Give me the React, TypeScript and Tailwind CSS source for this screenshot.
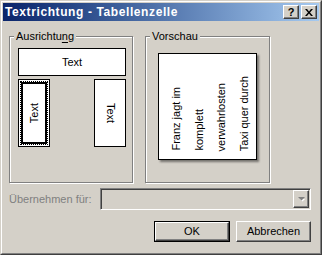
import React from 'react'

const raised =
  'border border-t-white border-l-white border-r-[#404040] border-b-[#404040] shadow-[inset_-1px_-1px_0_#808080] bg-[#d4d0c8]'

function GroupBox({ label, accel, className, children }: { label: string; accel?: number; className: string; children: React.ReactNode }) {
  return (
    <div className={`relative border border-[#808080] shadow-[inset_1px_1px_0_#ffffff,1px_1px_0_#ffffff] ${className}`}>
      <span className="absolute -top-[7px] left-[4px] bg-[#d4d0c8] px-[2px] leading-[13px]">
        {accel === undefined
          ? label
          : (
            <>
              {label.slice(0, accel)}
              <span className="underline underline-offset-2">{label[accel]}</span>
              {label.slice(accel + 1)}
            </>
          )}
      </span>
      {children}
    </div>
  )
}

function TitleBar() {
  return (
    <div className="flex h-[18px] items-center bg-gradient-to-r from-[#0a246a] to-[#a6caf0] pl-[2px] pr-[2px]">
      <span className="text-[12px] font-bold tracking-[0.6px] text-white leading-none">Textrichtung - Tabellenzelle</span>
      <div className="ml-auto flex gap-[2px]">
        <div className={`flex h-[14px] w-[16px] items-center justify-center ${raised}`}>
          <span className="text-[11px] font-bold leading-none">?</span>
        </div>
        <div className={`flex h-[14px] w-[16px] items-center justify-center ${raised}`}>
          <svg width="8" height="7" viewBox="0 0 8 7">
            <path d="M0 0h2l2 2.5L6 0h2L5 3.5 8 7H6L4 4.5 2 7H0l3-3.5z" fill="#000" />
          </svg>
        </div>
      </div>
    </div>
  )
}

export default function App() {
  return (
    <div className="h-[255px] w-[322px] border border-t-[#d4d0c8] border-l-[#d4d0c8] border-r-[#404040] border-b-[#404040] bg-[#d4d0c8] font-['Liberation_Sans',Arial,sans-serif] text-[11px] text-black">
      <div className="flex h-full flex-col border border-t-white border-l-white border-r-[#808080] border-b-[#808080] p-px">
        <TitleBar />

        <div className="mt-[15px] flex gap-[12px] pl-[6px]">
          <GroupBox label="Ausrichtung" accel={9} className="h-[147px] w-[124px]">
            <div className="flex w-[116px] flex-col gap-[3px] pl-[8px] pt-[11px]">
              <div className="flex h-[28px] w-[108px] items-center justify-center border border-black bg-white">
                Text
              </div>
              <div className="flex w-[108px] justify-between">
                <div className="h-[68px] w-[32px] border border-black bg-white p-px">
                  <div className="h-full border border-dotted border-black">
                    <div className="flex h-full items-center justify-center border-2 border-black bg-white">
                      <span className="rotate-180 [writing-mode:vertical-rl] leading-none">Text</span>
                    </div>
                  </div>
                </div>
                <div className="flex h-[68px] w-[32px] items-center justify-center border border-black bg-white">
                  <span className="[writing-mode:vertical-rl] leading-none">Text</span>
                </div>
              </div>
            </div>
          </GroupBox>

          <GroupBox label="Vorschau" className="h-[147px] w-[125px]">
            <div className="pl-[12px] pt-[16px]">
              <div className="flex h-[107px] w-[99px] items-end border border-black bg-white pb-[8px] pl-[6px] shadow-[2px_2px_2px_rgba(0,0,0,0.45)]">
                {['Franz jagt im', 'komplett', 'verwahrlosten', 'Taxi quer durch'].map((line) => (
                  <span key={line} className="rotate-180 whitespace-nowrap [writing-mode:vertical-rl] leading-[22.5px]">
                    {line}
                  </span>
                ))}
              </div>
            </div>
          </GroupBox>
        </div>

        <div className="mt-[5px] flex h-[22px] items-center pl-[6px] pr-[8px]">
          <span className="text-[#808080]">Übernehmen für:</span>
          <div className="ml-auto flex h-[22px] w-[211px] justify-end border border-t-[#808080] border-l-[#808080] border-r-white border-b-white bg-[#d4d0c8] p-px shadow-[inset_1px_1px_0_#404040]">
            <div className={`flex h-full w-[16px] items-center justify-center ${raised}`}>
              <svg width="7" height="5" viewBox="0 0 7 5">
                <path d="M1 1h5L3.5 3.5z" fill="#ffffff" transform="translate(1 1)" />
                <path d="M0 0h7L3.5 3.5z" fill="#808080" />
              </svg>
            </div>
          </div>
        </div>

        <div className="mt-[11px] flex justify-end gap-[6px] pr-[8px]">
          <div className="h-[21px] w-[76px] border border-black">
            <div className={`flex h-full items-center justify-center ${raised}`}>OK</div>
          </div>
          <div className={`flex h-[21px] w-[75px] items-center justify-center ${raised}`}>Abbrechen</div>
        </div>
      </div>
    </div>
  )
}
